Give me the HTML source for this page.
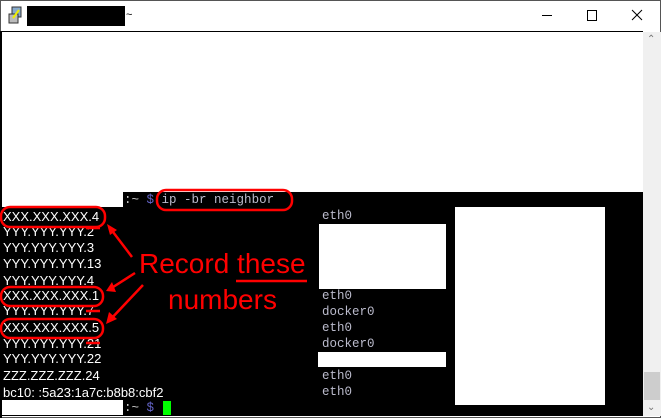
<!DOCTYPE html><html><head><style>
body{margin:0;width:661px;height:418px;overflow:hidden;background:#fff;font-family:"Liberation Sans",sans-serif;position:relative}
.a{position:absolute}
.l{position:absolute;left:3px;color:#fff;font-size:13px;line-height:16px;white-space:nowrap}
.m{position:absolute;font-family:"Liberation Mono",monospace;font-size:12.5px;color:#bbc;line-height:16px}
</style></head><body>
<div class="a" style="left:0;top:0;width:661px;height:418px;border:1px solid #555;box-sizing:border-box"></div>
<svg class="a" style="left:8px;top:6px" width="16" height="18"><rect x="4" y="1" width="9" height="10" fill="#8ac" stroke="#333"/><rect x="1" y="8" width="9" height="9" fill="#bbb" stroke="#333"/><path d="M5 12 L11 4" stroke="#ee0" stroke-width="2"/></svg>
<div class="a" style="left:27px;top:6px;width:98px;height:20px;background:#000"></div>
<div class="a" style="left:126px;top:9px;font-size:11px">~</div>
<div class="a" style="left:542px;top:15px;width:10px;height:1px;background:#000"></div>
<div class="a" style="left:587px;top:10px;width:8px;height:9px;border:1px solid #000"></div>
<svg class="a" style="left:631px;top:9px" width="12" height="12"><path d="M1 1L11 11M11 1L1 11" stroke="#000"/></svg>
<div class="a" style="left:0;top:31px;width:643px;height:1px;background:#000"></div>
<div class="a" style="left:0;top:31px;width:2px;height:387px;background:#000"></div>
<div class="a" style="left:643px;top:32px;width:18px;height:384px;background:#f0f0f0"></div>
<div class="a" style="left:644px;top:372px;width:16px;height:28px;background:#cdcdcd"></div>
<div class="a" style="left:647px;top:34px;font-size:10px;color:#777">&#8963;</div>
<div class="a" style="left:647px;top:402px;font-size:10px;color:#777">&#8964;</div>
<div class="a" style="left:2px;top:192px;width:641px;height:224px;background:#000"></div>
<div class="a" style="left:2px;top:192px;width:121px;height:15px;background:#fff"></div>
<div class="a" style="left:2px;top:400px;width:121px;height:15px;background:#fff"></div>
<div class="m" style="left:124px;top:192px"><span style="color:#ccc">:~</span> <span style="color:#66c">$</span> ip -br neighbor</div>
<div class="m" style="left:124px;top:400px"><span style="color:#ccc">:~</span> <span style="color:#66c">$</span></div>
<div class="a" style="left:163px;top:401px;width:8px;height:14px;background:#0f0"></div>
<div class="a" style="left:319px;top:224px;width:127px;height:65px;background:#fff"></div>
<div class="a" style="left:318px;top:352px;width:128px;height:15px;background:#fff"></div>
<div class="a" style="left:455px;top:207px;width:150px;height:198px;background:#fff"></div>
<div class="m" style="left:322px;top:208px">eth0</div>
<div class="m" style="left:322px;top:288px">eth0<br>docker0<br>eth0<br>docker0</div>
<div class="m" style="left:322px;top:368px">eth0<br>eth0</div>
<div class="l" style="top:209px">XXX.XXX.XXX.4</div>
<div class="l" style="top:224px">YYY.YYY.YYY.2</div>
<div class="l" style="top:240px">YYY.YYY.YYY.3</div>
<div class="l" style="top:256px">YYY.YYY.YYY.13</div>
<div class="l" style="top:273px">YYY.YYY.YYY.4</div>
<div class="l" style="top:288px">XXX.XXX.XXX.1</div>
<div class="l" style="top:303px">YYY.YYY.YYY.7</div>
<div class="l" style="top:320px">XXX.XXX.XXX.5</div>
<div class="l" style="top:336px">YYY.YYY.YYY.21</div>
<div class="l" style="top:351px">YYY.YYY.YYY.22</div>
<div class="l" style="top:368px">ZZZ.ZZZ.ZZZ.24</div>
<div class="l" style="top:385px">bc10: :5a23:1a7c:b8b8:cbf2</div>
<div class="a" style="left:139px;top:248px;color:#f00;font-size:28px;line-height:32px;white-space:nowrap">Record these</div>
<div class="a" style="left:168px;top:284px;color:#f00;font-size:28px;line-height:32px">numbers</div>
<svg class="a" style="left:0;top:0" width="661" height="418" fill="none" stroke="#f00">
<rect x="157" y="190" width="135" height="20" rx="9" stroke-width="2.5"/>
<rect x="1" y="207" width="104" height="20" rx="9" stroke-width="2.5"/>
<rect x="1" y="287" width="102" height="19" rx="9" stroke-width="2.5"/>
<rect x="1" y="319" width="102" height="19" rx="9" stroke-width="2.5"/>
<path d="M86 228H100M86 311H100M86 343H100M236 281H307" stroke-width="2.5"/>
<path d="M132 257L110 228M135 273L110 289M143 285L109 321" stroke-width="2.5"/>
<g fill="#f00" stroke="none"><path d="M107 224L117 230L110 235Z"/><path d="M106 291L112 282L116 292Z"/><path d="M106 324L109 312L117 319Z"/></g>
</svg>
</body></html>
